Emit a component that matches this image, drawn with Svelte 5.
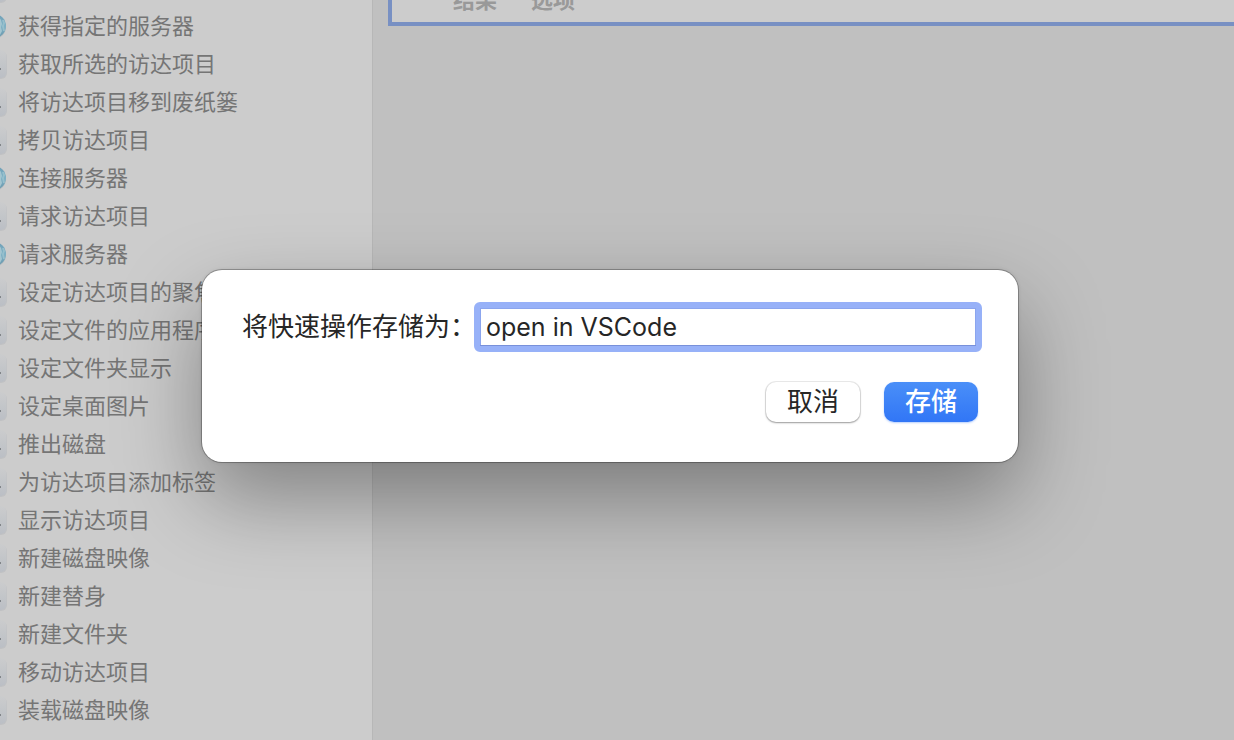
<script>
  const actions = [
    { name: '', icon: 'finder' },
    { name: '获得指定的服务器', icon: 'globe' },
    { name: '获取所选的访达项目', icon: 'finder' },
    { name: '将访达项目移到废纸篓', icon: 'finder' },
    { name: '拷贝访达项目', icon: 'finder' },
    { name: '连接服务器', icon: 'globe' },
    { name: '请求访达项目', icon: 'finder' },
    { name: '请求服务器', icon: 'globe' },
    { name: '设定访达项目的聚焦注释', icon: 'finder' },
    { name: '设定文件的应用程序', icon: 'finder' },
    { name: '设定文件夹显示', icon: 'finder' },
    { name: '设定桌面图片', icon: 'finder' },
    { name: '推出磁盘', icon: 'finder' },
    { name: '为访达项目添加标签', icon: 'finder' },
    { name: '显示访达项目', icon: 'finder' },
    { name: '新建磁盘映像', icon: 'finder' },
    { name: '新建替身', icon: 'finder' },
    { name: '新建文件夹', icon: 'finder' },
    { name: '移动访达项目', icon: 'finder' },
    { name: '装载磁盘映像', icon: 'finder' },
  ];
  let name = $state('open in VSCode');
</script>

<svg class="defs" aria-hidden="true">
  <defs>
    <linearGradient id="tile" x1="0" y1="0" x2="0" y2="1">
      <stop offset="0" stop-color="#cbcccd" />
      <stop offset="1" stop-color="#bbbfc5" />
    </linearGradient>
    <linearGradient id="sea" x1="0" y1="0" x2="0" y2="1">
      <stop offset="0" stop-color="#6f9fb6" />
      <stop offset="0.5" stop-color="#7cb0c5" />
      <stop offset="1" stop-color="#6a97ac" />
    </linearGradient>
  </defs>
</svg>

<div class="window">
  <nav class="library">
    <ul>
      {#each actions as action}
        <li>
          <svg class="icon" viewBox="0 0 28 32" aria-hidden="true">
            {#if action.icon === 'globe'}
              <circle cx="15" cy="17" r="12" fill="#b9bec0" />
              <circle cx="15" cy="16" r="12" fill="url(#sea)" />
              <path d="M20 7l2 3 1 4-1 3 1 4-2 4-2-4 1-5-1-4z" fill="#a3c5d0" />
              <path d="M24 10l1 3-1 3 1 5" fill="none" stroke="#96bfcc" stroke-width="2" />
            {:else}
              <rect x="0" y="3" width="28" height="28" rx="6" fill="#c0c1c3" />
              <rect x="0" y="2" width="27.5" height="28" rx="6" fill="url(#tile)" />
              <path d="M8 20l6-12 6 12M9 17h10" fill="none" stroke="#7b8188" stroke-width="2" />
              <rect x="20" y="20" width="2" height="2" fill="#818589" />
            {/if}
          </svg>
          <span>{action.name}</span>
        </li>
      {/each}
    </ul>
  </nav>
  <main class="workflow">
    <section class="step">
      <span>结果</span>
      <span>选项</span>
    </section>
  </main>
</div>

<div class="overlay">
  <form class="dialog" onsubmit={(e) => e.preventDefault()}>
    <div class="field">
      <label for="action-name">将快速操作存储为：</label>
      <input id="action-name" type="text" autocomplete="off" spellcheck="false" bind:value={name} />
    </div>
    <div class="buttons">
      <button type="button">取消</button>
      <button type="submit" class="primary">存储</button>
    </div>
  </form>
</div>

<style>
  :global(body) {
    background: #c0c0c0;
    font-family: Inter, "Noto Sans CJK SC", sans-serif;
  }
  .defs {
    position: absolute;
    width: 0;
    height: 0;
  }
  .window {
    display: flex;
    height: 100vh;
    overflow: hidden;
  }
  .library {
    box-sizing: border-box;
    flex: 0 0 373px;
    display: flex;
    flex-direction: column;
    justify-content: flex-end;
    padding-bottom: 11px;
    overflow: hidden;
    background: #cccccc;
    border-right: 1px solid #b7b7b7;
  }
  ul {
    margin: 0;
    padding: 0;
    list-style: none;
  }
  li {
    display: flex;
    align-items: center;
    gap: 11px;
    height: 38px;
    margin-left: -21px;
    color: #757575;
    font-size: 22px;
    line-height: 38px;
    white-space: nowrap;
  }
  .icon {
    flex: none;
    width: 28px;
    height: 32px;
  }
  .workflow {
    flex: 1;
    padding-left: 15px;
  }
  .step {
    box-sizing: border-box;
    display: flex;
    align-items: flex-end;
    gap: 34px;
    height: 26px;
    padding: 0 0 6px 61px;
    overflow: hidden;
    border: solid #7890c3;
    border-width: 0 0 4px 4px;
    background: #cccccc;
    color: #999999;
    font-size: 22px;
    font-weight: 700;
    line-height: 32px;
  }
  .overlay {
    position: absolute;
    inset: 0;
    display: flex;
    justify-content: center;
    align-items: flex-start;
    padding: 270px 14px 0 0;
  }
  .dialog {
    box-sizing: border-box;
    width: 816px;
    max-width: 90%;
    padding: 32px 36px 40px 40px;
    border-radius: 20px;
    background: #ffffff;
    box-shadow: 0 0 0 1px rgba(0, 0, 0, 0.25), 0 0 4px rgba(0, 0, 0, 0.12), 0 36px 84px rgba(0, 0, 0, 0.36);
    color: #262626;
    font-size: 26px;
  }
  .field {
    display: flex;
    align-items: center;
  }
  label {
    flex: 0 0 232px;
    min-width: 0;
    line-height: 50px;
    white-space: nowrap;
  }
  input {
    box-sizing: border-box;
    flex: 1;
    min-width: 0;
    height: 50px;
    padding: 0 6px;
    border: 6px solid #97b1f8;
    border-radius: 6px;
    outline: none;
    background: #ffffff;
    box-shadow: inset 0 -1px 0 #7890da, inset 0 0 0 1px #8ba5ee;
    color: #262626;
    font-family: inherit;
    font-size: 25px;
  }
  .buttons {
    display: flex;
    justify-content: flex-end;
    gap: 24px;
    padding: 30px 4px 0 0;
  }
  button {
    width: 94px;
    height: 40px;
    padding: 0;
    border: 0;
    border-radius: 10px;
    background: #ffffff;
    box-shadow: 0 0 0 1px rgba(0, 0, 0, 0.08), 0 1px 2px rgba(0, 0, 0, 0.35);
    color: #262626;
    font: inherit;
    line-height: 38px;
  }
  .primary {
    background: linear-gradient(#4a8ff8, #3176f6);
    box-shadow: 0 1px 2px rgba(49, 118, 246, 0.35);
    color: #ffffff;
    font-weight: 500;
  }
</style>
